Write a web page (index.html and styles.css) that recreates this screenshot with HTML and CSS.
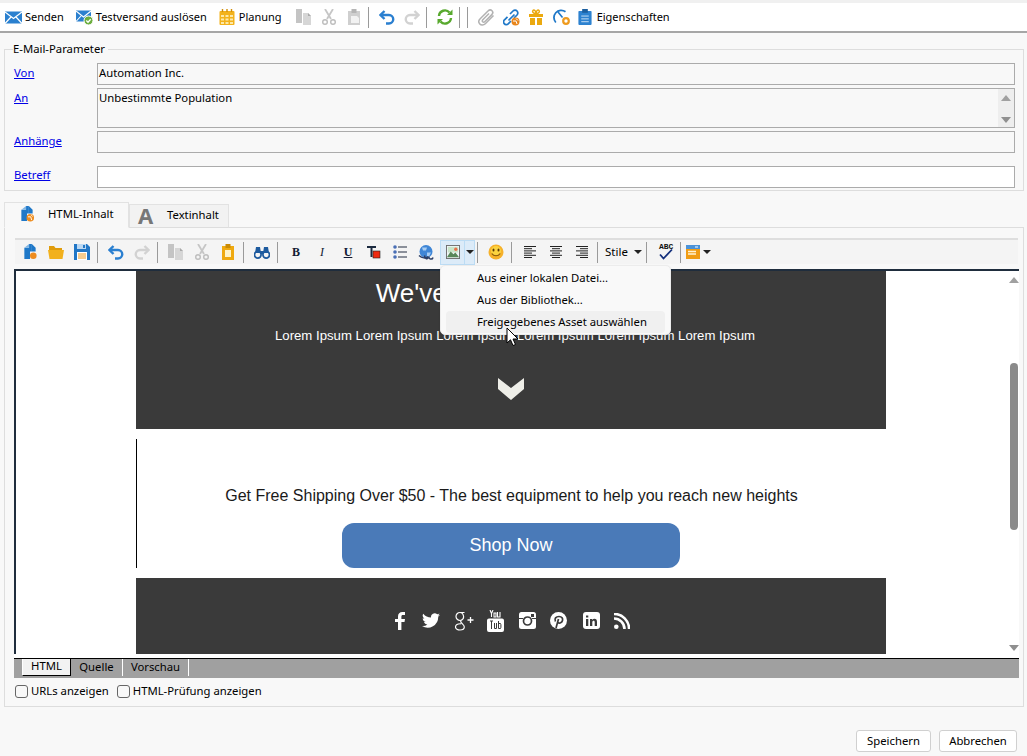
FILE: index.html
```html
<!DOCTYPE html>
<html lang="de">
<head>
<meta charset="utf-8">
<title>E-Mail-Parameter</title>
<link rel="stylesheet" href="styles.css">
</head>
<body>
<svg class="defs" width="0" height="0" aria-hidden="true">
  <symbol id="i-mail" viewBox="0 0 17 14"><rect x="0" y="1" width="17" height="12" fill="#2a80cf"/><path d="M0 1.5l8.5 6.5L17 1.5M0 13l6-6.5M17 13l-6-6.5" fill="none" stroke="#fff" stroke-width="1.2"/></symbol>
  <symbol id="i-test" viewBox="0 0 18 16"><rect x="0" y="1" width="15" height="11" fill="#2a80cf"/><path d="M0 1.5l7.5 6 7.5-6M0 12l5-5.500M15 12l-5-5.500" fill="none" stroke="#fff" stroke-width="1.100"/><circle cx="12.500" cy="11" r="4.500" fill="#6cae3e" stroke="#fff"/><path d="M10.300 11l1.700 1.700 2.700-3" fill="none" stroke="#fff" stroke-width="1.300"/></symbol>
  <symbol id="i-cal" viewBox="0 0 16 16"><rect x="0.500" y="2" width="15" height="14" rx="1" fill="#f3b21b"/><path d="M3.500 0v3M8 0v3M12.500 0v3" stroke="#d08e08" stroke-width="1.400"/><path d="M2 6h3v2H2zM6.500 6h3v2h-3zM11 6h3v2h-3zM2 9.500h3v2H2zM6.500 9.500h3v2h-3zM11 9.500h3v2h-3zM2 13h3v2H2zM6.500 13h3v2h-3zM11 13h3v2h-3z" fill="#fde9a8"/></symbol>
  <symbol id="i-copy" viewBox="0 0 16 16"><path d="M0 0h6v14H0z" fill="#c4c4c4"/><path d="M7 4h5l3 3v9H7z" fill="#d6d6d6"/><path d="M12 4v3h3" fill="#aaa"/></symbol>
  <symbol id="i-cut" viewBox="0 0 16 16"><path d="M4 0l6 10M12 0L6 10" stroke="#c6c6c6" stroke-width="1.800" fill="none"/><circle cx="4" cy="13" r="2.300" fill="none" stroke="#bdbdbd" stroke-width="1.400"/><circle cx="12" cy="13" r="2.300" fill="none" stroke="#bdbdbd" stroke-width="1.400"/></symbol>
  <symbol id="i-paste" viewBox="0 0 14 16"><path d="M1 2h12v14H1z" fill="#cfcfcf"/><path d="M4.500 0h5v4h-5z" fill="#b5b5b5"/><path d="M4 7h6l2 2v5H4z" fill="#f2f2f2"/></symbol>
  <symbol id="i-undo" viewBox="0 0 16 16"><path d="M5.500 2L1.500 6l4 4" fill="none" stroke="#2a7fd0" stroke-width="2.400"/><path d="M2 6h8a4 4 0 0 1 0 8.500H7" fill="none" stroke="#2a7fd0" stroke-width="2.400"/></symbol>
  <symbol id="i-redo" viewBox="0 0 16 16"><path d="M10.500 2l4 4-4 4" fill="none" stroke="#d2d2d2" stroke-width="2.400"/><path d="M14 6H6a4 4 0 0 0 0 8.500h3" fill="none" stroke="#d2d2d2" stroke-width="2.400"/></symbol>
  <symbol id="i-sync" viewBox="0 0 16 16"><path d="M2 7a6 6 0 0 1 10.500-3.500" fill="none" stroke="#58a92e" stroke-width="2.400"/><path d="M10 6h5.500V.5z" fill="#58a92e"/><path d="M14 9a6 6 0 0 1-10.500 3.500" fill="none" stroke="#58a92e" stroke-width="2.400"/><path d="M6 10H.5v5.500z" fill="#58a92e"/></symbol>
  <symbol id="i-clip" viewBox="0 0 17 17"><path d="M15.500 6.500L7.300 14.700c-1.700 1.700-4.300 1.700-5.500.3-1.300-1.400-1.200-3.700.4-5.300L10 2c1.300-1.300 3-1.300 4-.3s1 2.700-.2 3.900L6.700 12.700c-.6.600-1.500.6-2 .1s-.5-1.300.1-2L11 4.500" fill="none" stroke="#b2b2b2" stroke-width="1.500"/></symbol>
  <symbol id="i-link" viewBox="0 0 17 17"><path d="M7 5l3-3c1.200-1.200 3-1.200 4 0s1 2.800 0 4l-3 3M8 12l-2.800 2.800c-1.200 1.200-3 1-4-.2s-.8-2.600.3-3.800l3-3M5.500 11.500l6-6" fill="none" stroke="#1f78c8" stroke-width="1.700"/><circle cx="12.500" cy="12.500" r="4" fill="#e8861c"/><path d="M10 12h3l1 3M13 9.500l2 2" stroke="#fff" fill="none"/></symbol>
  <symbol id="i-gift" viewBox="0 0 16 16"><path d="M1 5h14v3H1zM2 9h5v7H2zM9 9h5v7H9z" fill="#eba90f"/><path d="M8 4.500C5 4.500 4 3 5 1.500s3 .5 3 3c0-2.500 2-4.500 3-3s0 3-3 3z" fill="none" stroke="#eba90f" stroke-width="1.500"/></symbol>
  <symbol id="i-gauge" viewBox="0 0 17 16"><path d="M2.800 13A7.300 7.300 0 0 1 12.500 2.200" fill="none" stroke="#1f78c8" stroke-width="1.800"/><path d="M5 2.500l4.500 5.500" stroke="#1f78c8" stroke-width="1.600"/><circle cx="13" cy="11.500" r="2.800" fill="none" stroke="#ee9a1e" stroke-width="2.200"/></symbol>
  <symbol id="i-props" viewBox="0 0 14 17"><rect y="2" width="14" height="15" rx="1" fill="#2d82d0"/><rect x="4" width="6" height="4" fill="#1c5f9f"/><path d="M3 7.500h8M3 10.500h8M3 13.500h8" stroke="#cfe3f6"/></symbol>
  <symbol id="i-new" viewBox="0 0 16 17"><path d="M2 4h5V0h3v8H2zM2 8h6v8H2z" fill="#1f78c8"/><path d="M10 0l4 4v4h-4z" fill="#1f78c8"/><path d="M7 0L2 4h5z" fill="#7db4e4"/><circle cx="11.500" cy="12.500" r="3.500" fill="#ee8c1e"/></symbol>
  <symbol id="i-html" viewBox="0 0 16 17"><path d="M2 4h5V0h3v8H2zM2 8h6v8H2z" fill="#1f78c8"/><path d="M10 0l4 4v4h-4z" fill="#1f78c8"/><path d="M7 0L2 4h5z" fill="#7db4e4"/><circle cx="11.500" cy="12.500" r="4" fill="#ee8c1e"/><path d="M9 11.500h3l1 3.500M12 9l2 2" stroke="#fff" fill="none"/></symbol>
  <symbol id="i-open" viewBox="0 0 16 14"><path d="M1 1h5l1.500 2H14v2H1z" fill="#e09c0c"/><path d="M0 5h16l-1.500 9h-13z" fill="#f2b11d"/></symbol>
  <symbol id="i-save" viewBox="0 0 16 16"><path d="M0 0h13l3 3v13H0z" fill="#2277c6"/><path d="M3 0h9v5H3z" fill="#bcd8f2"/><path d="M9 1h2v3H9z" fill="#2277c6"/><path d="M3 8h10v8H3z" fill="#fff"/><path d="M4 10h8M4 12h8M4 14h8" stroke="#ee9a1e"/></symbol>
  <symbol id="i-pasteo" viewBox="0 0 12 16"><path d="M0 2h12v14H0z" fill="#efa90f"/><path d="M3.500 0h5v4h-5z" fill="#c98a05"/><path d="M3 6h6v7H3z" fill="#fff3c8"/></symbol>
  <symbol id="i-find" viewBox="0 0 16 14"><circle cx="3.800" cy="9.800" r="3.300" fill="none" stroke="#1d5a9e" stroke-width="1.700"/><circle cx="12.200" cy="9.800" r="3.300" fill="none" stroke="#1d5a9e" stroke-width="1.700"/><path d="M2 2h4l1 6H1zM10 2h4l1 6H9zM6.500 6h3v3h-3z" fill="#1d5a9e"/></symbol>
  <symbol id="i-tcolor" viewBox="0 0 14 14"><path d="M0 1h9v2H5.500v9h-2V3H0z" fill="#1b2a3f"/><rect x="6" y="6" width="7" height="7" fill="#ee2b12" stroke="#222" stroke-width=".6"/></symbol>
  <symbol id="i-list" viewBox="0 0 14 14"><circle cx="2" cy="2" r="1.800" fill="#4a6fb5"/><circle cx="2" cy="7" r="1.800" fill="#4a6fb5"/><circle cx="2" cy="12" r="1.800" fill="#4a6fb5"/><path d="M5 2h9M5 7h9M5 12h9" stroke="#222c40" stroke-width="1.100"/></symbol>
  <symbol id="i-globe" viewBox="0 0 17 16"><circle cx="8" cy="7" r="6.500" fill="#3f86d6"/><path d="M4 3h5l-1 3H5zM9 8h4l-2 4H9z" fill="#a8cdf2"/><path d="M1 11c3 3 7 3 9 1M7 11a2 2 0 1 0 3.500 2M11 12a2 2 0 1 0 4 1" fill="none" stroke="#2c3f66" stroke-width="1.500"/></symbol>
  <symbol id="i-image" viewBox="0 0 15 15"><rect x=".5" y=".5" width="14" height="14" fill="#eef5f6" stroke="#6c6c6c"/><path d="M2 2h11v6H2z" fill="#c9e4c8"/><path d="M1 13l4-6 3 3 2-2 4 5z" fill="#58875a"/><circle cx="10.500" cy="4.500" r="1.800" fill="#e8704a"/></symbol>
  <symbol id="i-smile" viewBox="0 0 16 16"><circle cx="8" cy="8" r="7.500" fill="#f6b12a"/><circle cx="8" cy="7" r="5" fill="#fbd33f"/><ellipse cx="5.500" cy="6" rx="1" ry="1.600" fill="#5b3a08"/><ellipse cx="10.500" cy="6" rx="1" ry="1.600" fill="#5b3a08"/><path d="M3.800 9.500c2 3 6.400 3 8.400 0" fill="none" stroke="#8b5a0a" stroke-width="1.200"/></symbol>
  <symbol id="i-left" viewBox="0 0 12 12"><path d="M0 .5h12M0 2.700h8M0 4.900h12M0 7.100h8M0 9.300h12M0 11.500h8" stroke="#222"/></symbol>
  <symbol id="i-center" viewBox="0 0 12 12"><path d="M0 .5h12M2 2.700h8M0 4.900h12M2 7.100h8M0 9.300h12M2 11.500h8" stroke="#222"/></symbol>
  <symbol id="i-right" viewBox="0 0 12 12"><path d="M0 .5h12M4 2.700h8M0 4.900h12M4 7.100h8M0 9.300h12M4 11.500h8" stroke="#222"/></symbol>
  <symbol id="i-abc" viewBox="0 0 16 16"><path d="M3 10.500l3.500 4L15 5.500" fill="none" stroke="#14307c" stroke-width="1.800"/></symbol>
  <symbol id="i-form" viewBox="0 0 14 14"><path d="M0 0h14v4H0z" fill="#4b93d9"/><path d="M0 4h14v10H0z" fill="#f09c13"/><path d="M2 6.500h8M2 9h8" stroke="#fff3d5" stroke-width="1.300"/><path d="M9 2h3" stroke="#fff"/></symbol>
  <symbol id="i-f" viewBox="0 0 10 18"><path d="M3 18V10H0V7h3V4.500C3 1.500 4.800 0 7.300 0H10v3H8C6.700 3 6.400 3.600 6.400 4.700V7H10l-.5 3H6.400v8z" fill="#fff"/></symbol>
  <symbol id="i-tw" viewBox="0 0 18 15"><path d="M18 1.800c-.7.300-1.400.5-2.100.6.800-.5 1.300-1.200 1.600-2-.7.400-1.500.7-2.300.9A3.700 3.700 0 0 0 9 4.600 10.500 10.500 0 0 1 1.300.7a3.700 3.700 0 0 0 1.100 4.900c-.6 0-1.200-.2-1.700-.4 0 1.800 1.300 3.300 3 3.700-.5.100-1.100.2-1.700.1.500 1.500 1.800 2.500 3.400 2.500A7.400 7.400 0 0 1 0 13a10.500 10.500 0 0 0 16.200-9.300c.7-.5 1.300-1.200 1.800-1.900z" fill="#fff"/></symbol>
  <symbol id="i-gp" viewBox="0 0 19 20"><path d="M9.500 1.500H5C2.500 1.500 1 3.500 1 5.500S2.800 9.500 5 9.500 9 7.500 8.500 5 6 1.500 5 1.500M6 9.500c-1 1 0 2 1 3s2.300 1.700 2.300 3.500-2 3-4.300 3S.5 17.800.5 16s2-3.500 5.500-3.200" fill="none" stroke="#fff" stroke-width="1.200"/><path d="M15.500 6v6M12.500 9h6" stroke="#fff" stroke-width="1.300"/></symbol>
  <symbol id="i-yt" viewBox="0 0 17 22"><path d="M2 8.500h13a2 2 0 0 1 2 2v9.500a2 2 0 0 1-2 2H2a2 2 0 0 1-2-2v-9.500a2 2 0 0 1 2-2z" fill="#fff"/><path d="M3 11h3M4.500 11v8M7.500 13v5.500h2V13M11.500 11v7.500h2c.6 0 .6-5 0-5h-2" fill="none" stroke="#3a3a3a"/><path d="M3 0l1.500 3.500L6 0M4.500 3.500V7M7 3h2v4H7zM10.500 2v5h2.500V2" fill="none" stroke="#fff" stroke-width="1.100"/></symbol>
  <symbol id="i-ig" viewBox="0 0 17 17"><rect width="17" height="17" rx="2.500" fill="#fff"/><circle cx="8.500" cy="9" r="4" fill="none" stroke="#3a3a3a" stroke-width="1.700"/><path d="M0 6.500h4M13 6.500h4" stroke="#3a3a3a"/><rect x="12" y="2" width="3" height="3" fill="#3a3a3a"/></symbol>
  <symbol id="i-pin" viewBox="0 0 17 17"><circle cx="8.500" cy="8.500" r="8.500" fill="#fff"/><path d="M6 16l2.500-9M5.500 9.500c-1.500-3 .5-5 3.500-5s4 2 3.500 4-3 3.500-4.500 2" fill="none" stroke="#3a3a3a" stroke-width="1.700"/></symbol>
  <symbol id="i-in" viewBox="0 0 17 17"><rect width="17" height="17" rx="3" fill="#fff"/><path d="M3 7h2.300v7H3zM3 3.500h2.300v2H3zM7 7h2.200v1c.6-.8 1.400-1.200 2.300-1.200 1.700 0 2.500 1 2.500 3V14h-2.300v-3.800c0-1-.3-1.500-1.100-1.500s-1.300.6-1.300 1.600V14H7z" fill="#3a3a3a"/></symbol>
  <symbol id="i-rss" viewBox="0 0 16 16"><circle cx="2.300" cy="13.700" r="2.300" fill="#fff"/><path d="M0 5.500a10.500 10.500 0 0 1 10.500 10.500M0 .9a15.100 15.100 0 0 1 15.100 15.100" fill="none" stroke="#fff" stroke-width="2.600"/></symbol>
</svg>

<header class="topbar">
  <div class="item"><svg class="ic-17"><use href="#i-mail"/></svg><span>Senden</span></div>
  <div class="item item-test"><svg class="ic-18"><use href="#i-test"/></svg><span>Testversand auslösen</span></div>
  <div class="item item-plan"><svg class="ic-16"><use href="#i-cal"/></svg><span>Planung</span></div>
  <div class="tools tools-start">
    <span class="tb"><svg class="ic-16"><use href="#i-copy"/></svg></span>
    <span class="tb"><svg class="ic-16"><use href="#i-cut"/></svg></span>
    <span class="tb"><svg class="ic-16"><use href="#i-paste"/></svg></span>
    <i class="sep"></i>
    <span class="tb"><svg class="ic-16"><use href="#i-undo"/></svg></span>
    <span class="tb"><svg class="ic-16"><use href="#i-redo"/></svg></span>
    <i class="sep"></i>
    <span class="tb"><svg class="ic-16"><use href="#i-sync"/></svg></span>
    <i class="sep"></i>
    <i class="sep"></i>
    <span class="tb"><svg class="ic-17"><use href="#i-clip"/></svg></span>
    <span class="tb"><svg class="ic-17"><use href="#i-link"/></svg></span>
    <span class="tb"><svg class="ic-16"><use href="#i-gift"/></svg></span>
    <span class="tb"><svg class="ic-17"><use href="#i-gauge"/></svg></span>
    <div class="item item-props"><svg class="ic-16"><use href="#i-props"/></svg><span>Eigenschaften</span></div>
  </div>
</header>

<fieldset class="params">
  <legend>E-Mail-Parameter</legend>
  <div class="row"><a class="lnk" href="#">Von</a><div class="field">Automation Inc.</div></div>
  <div class="row"><a class="lnk" href="#">An</a><div class="field field-area">Unbestimmte Population<div class="mini-scroll"><b class="up"></b><b class="down"></b></div></div></div>
  <div class="row"><a class="lnk" href="#">Anhänge</a><div class="field"></div></div>
  <div class="row row-subject"><a class="lnk" href="#">Betreff</a><div class="field field-white"></div></div>
</fieldset>

<nav class="tabs">
  <div class="tab tab-on"><svg class="ic-16"><use href="#i-html"/></svg><span>HTML-Inhalt</span></div>
  <div class="tab"><span class="big-a">A</span><span>Textinhalt</span></div>
</nav>

<section class="panel">
  <div class="edbar">
    <span class="eb"><svg class="ic-16"><use href="#i-new"/></svg></span>
    <span class="eb"><svg class="ic-16"><use href="#i-open"/></svg></span>
    <span class="eb"><svg class="ic-16"><use href="#i-save"/></svg></span>
    <i class="esep"></i>
    <span class="eb"><svg class="ic-16"><use href="#i-undo"/></svg></span>
    <span class="eb"><svg class="ic-16"><use href="#i-redo"/></svg></span>
    <i class="esep"></i>
    <span class="eb"><svg class="ic-16"><use href="#i-copy"/></svg></span>
    <span class="eb"><svg class="ic-16"><use href="#i-cut"/></svg></span>
    <span class="eb"><svg class="ic-14"><use href="#i-pasteo"/></svg></span>
    <i class="esep"></i>
    <span class="eb"><svg class="ic-16"><use href="#i-find"/></svg></span>
    <i class="esep"></i>
    <span class="eb fmt fmt-b">B</span>
    <span class="eb fmt fmt-i">I</span>
    <span class="eb fmt fmt-u">U</span>
    <span class="eb"><svg class="ic-14"><use href="#i-tcolor"/></svg></span>
    <span class="eb"><svg class="ic-14"><use href="#i-list"/></svg></span>
    <span class="eb"><svg class="ic-17"><use href="#i-globe"/></svg></span>
    <div class="picker">
      <span class="pick-img"><svg class="ic-14"><use href="#i-image"/></svg></span>
      <span class="pick-arrow"><b class="caret"></b></span>
      <div class="menu">
        <div class="menu-item">Aus einer lokalen Datei...</div>
        <div class="menu-item">Aus der Bibliothek...</div>
        <div class="menu-item menu-hover">Freigegebenes Asset auswählen</div>
        <svg class="cursor" width="13" height="20" viewBox="0 0 13 20"><path d="M1 1v15l3.500-3.200L7 18.500l2.500-1L7 12h5z" fill="#fff" stroke="#000"/></svg>
      </div>
    </div>
    <i class="esep"></i>
    <span class="eb"><svg class="ic-16"><use href="#i-smile"/></svg></span>
    <i class="esep"></i>
    <span class="eb"><svg class="ic-12"><use href="#i-left"/></svg></span>
    <span class="eb"><svg class="ic-12"><use href="#i-center"/></svg></span>
    <span class="eb"><svg class="ic-12"><use href="#i-right"/></svg></span>
    <i class="esep"></i>
    <span class="styles-box">Stile<b class="caret"></b></span>
    <i class="esep"></i>
    <span class="eb abc"><span class="abc-t">ABC</span><svg class="ic-16"><use href="#i-abc"/></svg></span>
    <i class="esep"></i>
    <span class="form-box"><svg class="ic-14"><use href="#i-form"/></svg><b class="caret"></b></span>
  </div>

  <div class="frame">
    <div class="viewport">
      <div class="mail">
        <div class="hero">
          <h1 class="hero-title">We've got you covered!</h1>
          <p class="hero-text">Lorem Ipsum Lorem Ipsum Lorem Ipsum Lorem Ipsum Lorem Ipsum Lorem Ipsum</p>
          <svg class="chev" width="26" height="22" viewBox="0 0 26 22"><path d="M0 0l13 10L26 0v11L13 22 0 11z" fill="#eeeee8"/></svg>
        </div>
        <div class="promo">
          <p class="promo-text">Get Free Shipping Over $50 - The best equipment to help you reach new heights</p>
          <div class="shop">Shop Now</div>
        </div>
        <div class="social">
          <svg class="so so-f"><use href="#i-f"/></svg>
          <svg class="so so-tw"><use href="#i-tw"/></svg>
          <svg class="so so-gp"><use href="#i-gp"/></svg>
          <svg class="so so-yt"><use href="#i-yt"/></svg>
          <svg class="so so-ig"><use href="#i-ig"/></svg>
          <svg class="so so-pin"><use href="#i-pin"/></svg>
          <svg class="so so-in"><use href="#i-in"/></svg>
          <svg class="so so-rss"><use href="#i-rss"/></svg>
        </div>
      </div>
      <div class="vscroll"><b class="up"></b><span class="thumb"></span><b class="down"></b></div>
    </div>
    <div class="modes">
      <span class="mode mode-on">HTML</span>
      <span class="mode mode-q">Quelle</span>
      <span class="mode mode-v">Vorschau</span>
    </div>
  </div>

  <div class="checks">
    <label class="chk"><i class="box"></i>URLs anzeigen</label>
    <label class="chk"><i class="box"></i>HTML-Prüfung anzeigen</label>
  </div>
</section>

<footer class="actions">
  <span class="btn btn-save">Speichern</span>
  <span class="btn btn-cancel">Abbrechen</span>
</footer>
</body>
</html>
```

FILE: styles.css
```css
* { box-sizing: border-box; }
html, body { margin: 0; padding: 0; }
body {
  width: 1027px;
  height: 756px;
  overflow: hidden;
  background: #f8f8f8;
  color: #000;
  font: 11.3px/16px "Noto Sans", "Open Sans", sans-serif;
  border-top: 3px solid #f0f0f0;
}
svg { display: block; flex: none; }
.defs { position: absolute; }
.ic-12 { width: 12px; height: 12px; }
.ic-14 { width: 14px; height: 16px; }
.ic-16 { width: 16px; height: 16px; }
.ic-17 { width: 17px; height: 17px; }
.ic-18 { width: 18px; height: 17px; }

/* top toolbar */
.topbar {
  display: flex;
  align-items: center;
  height: 30px;
  padding-left: 5px;
  background: #fff;
  border-bottom: 2px solid #a6a6a6;
  font-size: 11px;
}
.item { display: flex; align-items: center; gap: 3px; white-space: nowrap; }
.item-test { margin-left: 12px; gap: 2px; }
.item-plan { margin-left: 12px; gap: 4px; }
.tools { display: flex; align-items: center; }
.tools-start { margin-left: 10px; }
.tb { width: 25px; display: flex; justify-content: center; }
.sep { display: block; width: 1px; height: 21px; background: #9a9a9a; margin: 0 6px 0 1px; }
.item-props { margin-left: 3px; gap: 4px; }

/* parameters */
.params {
  margin: 8px 3px 0 4px;
  padding: 6px 8px 2px 9px;
  border: 1px solid #ddd;
  min-width: 0;
}
.params legend { padding: 0 3px 0 0; margin-left: -1px; line-height: 16px; }
.row { display: grid; grid-template-columns: 83px 1fr; margin-bottom: 3px; }
.row-subject { margin: 13px 0 0; }
.row-subject .lnk { padding-top: 1px; }
.lnk { color: #0000e6; text-decoration: underline; padding-top: 2px; }
.field {
  position: relative;
  height: 22px;
  padding: 1px;
  border: 1px solid #ababab;
  background: #f8f8f8;
}
.field-area { height: 40px; }
.field-white { background: #fff; }
.mini-scroll {
  position: absolute;
  top: 0; right: 0; bottom: 0;
  width: 16px;
  padding: 6px 0 4px;
  background: #eeeeee;
  display: flex;
  flex-direction: column;
  justify-content: space-between;
  align-items: center;
}
.up { width: 0; height: 0; border: 5px solid transparent; border-top: 0; border-bottom: 6px solid #a0a0a0; }
.down { width: 0; height: 0; border: 5px solid transparent; border-bottom: 0; border-top: 6px solid #8f8f8f; }

/* tabs */
.tabs { display: flex; align-items: flex-end; margin: 11px 0 -1px 4px; height: 26px; position: relative; }
.tab {
  display: flex;
  align-items: center;
  height: 24px;
  width: 100px;
  padding: 0 0 2px 8px;
  gap: 13px;
  background: #f2f2f2;
  border: 1px solid #e2e2e2;
  border-bottom-color: #ddd;
}
.tab-on {
  width: 125px;
  height: 26px;
  padding-left: 14px;
  gap: 13px;
  background: #f8f8f8;
  border-bottom-color: #f8f8f8;
  position: relative;
  z-index: 1;
}
.big-a { font: bold 22px/24px "Noto Sans", sans-serif; color: #777; width: 16px; margin-top: -1px; }

/* panel */
.panel {
  margin: 0 3px 0 4px;
  height: 480px;
  padding: 10px 4px 0 9px;
  border: 1px solid #ddd;
}
.edbar {
  display: flex;
  align-items: center;
  height: 26px;
  margin: 0 1px;
  padding-left: 2px;
  background: #f4f4f4;
  border-top: 2px solid #dedede;
}
.eb { width: 26px; height: 24px; display: flex; align-items: center; justify-content: center; flex: none; }
.esep { display: block; flex: none; width: 1px; height: 21px; background: #9a9a9a; margin: 0 5px 0 2px; }
.fmt { font-family: "Liberation Serif", serif; font-size: 12px; color: #111a33; }
.fmt-b { font-weight: bold; }
.fmt-i { font-style: italic; }
.fmt-u { font-weight: bold; text-decoration: underline; }
.picker { position: relative; display: flex; height: 25px; margin-left: 1px; }
.pick-img {
  width: 25px;
  display: flex;
  align-items: center;
  justify-content: center;
  background: #dcebf8;
  border: 1px solid #bcdcf4;
}
.pick-arrow {
  width: 10px;
  display: flex;
  align-items: center;
  justify-content: center;
  background: #dcebf8;
  border: 1px solid #bcdcf4;
  border-left: 0;
}
.caret { display: block; width: 0; height: 0; border: 4px solid transparent; border-bottom: 0; border-top: 4px solid #222; }
.styles-box { width: 41px; display: flex; align-items: center; justify-content: space-between; padding-left: 2px; padding-right: 2px; font-size: 11.5px; }
.abc { position: relative; }
.abc-t { position: absolute; top: 2px; left: 7px; font: bold 8px/9px "Liberation Mono", monospace; color: #111; }
.form-box { display: flex; align-items: center; gap: 3px; }

/* insert menu */
.menu {
  position: absolute;
  z-index: 5;
  left: 0;
  top: 25px;
  width: 231px;
  height: 70px;
  padding: 1px 5px 0;
  background: #f9f9f9;
  border: 1px solid #ececec;
  border-radius: 5px;
  box-shadow: 0 1px 2px rgba(0,0,0,.12);
}
.menu-item { height: 22px; line-height: 22px; padding-left: 31px; border-radius: 4px; white-space: nowrap; }
.menu-hover { background: #f0f0f0; }
.cursor { position: absolute; left: 65px; top: 61px; }

/* editor frame */
.frame { margin-top: 5px; background: #fff; }
.viewport {
  display: flex;
  height: 385px;
  background: #fff;
  border-top: 2px solid #1f2d3d;
  border-left: 2px solid #1f2d3d;
  overflow: hidden;
}
.mail { flex: 1; padding-left: 120px; padding-right: 123px; font-family: "Liberation Sans", Arial, sans-serif; }
.hero {
  height: 158px;
  padding-top: 7px;
  background: #3a3a3a;
  color: #fff;
  text-align: center;
}
.hero-title { margin: 0; font-size: 26px; line-height: 30px; font-weight: normal; }
.hero-text { margin: 20px 0 0; padding-left: 8px; font-size: 13.2px; line-height: 16px; }
.chev { margin: 34px auto 0; }
.promo {
  height: 129px;
  margin-top: 10px;
  padding-top: 47px;
  border-left: 1px solid #000;
  text-align: center;
}
.promo-text { margin: 0; font-size: 16px; line-height: 19px; color: #1a1a1a; }
.shop {
  width: 338px;
  height: 45px;
  margin: 18px auto 0 205px;
  border-radius: 12px;
  background: #4a7ab8;
  color: #fff;
  font-size: 18px;
  line-height: 45px;
}
.social {
  display: flex;
  align-items: center;
  height: 76px;
  margin-top: 10px;
  padding: 9px 0 0 259px;
  background: #3a3a3a;
}
.so-f { width: 10px; height: 18px; }
.so-tw { width: 18px; height: 15px; margin-left: 17px; }
.so-gp { width: 19px; height: 20px; margin-left: 15px; }
.so-yt { width: 17px; height: 22px; margin-left: 13px; }
.so-ig { width: 17px; height: 17px; margin-left: 15px; }
.so-pin { width: 17px; height: 17px; margin-left: 14px; }
.so-in { width: 17px; height: 17px; margin-left: 16px; }
.so-rss { width: 16px; height: 16px; margin-left: 14px; }
.vscroll {
  flex: none;
  width: 10px;
  display: flex;
  flex-direction: column;
  align-items: center;
  padding-top: 6px;
}
.thumb { width: 8px; height: 167px; margin-top: 80px; background: #8a8a8a; border-radius: 4px; }
.vscroll .down { margin-top: 115px; }
.modes {
  display: flex;
  height: 24px;
  padding-left: 8px;
  border-top: 4px solid #fff;
  background: #a0a0a0;
  box-shadow: inset 0 1px 0 #000;
}
.mode { height: 17px; line-height: 13px; text-align: center; margin-top: 1px; border-right: 1px solid #fff; }
.mode-q, .mode-v { line-height: 15px; }
.mode-on { width: 49px; background: #f2f2f2; border-left: 1px solid #fff; border-right: 1px solid #000; border-bottom: 1px solid #000; }
.mode-q { width: 52px; }
.mode-v { width: 66px; }
.checks { display: flex; margin-top: 5px; padding-left: 1px; gap: 8px; }
.chk { display: flex; align-items: center; gap: 3px; height: 16px; }
.box { display: block; width: 13px; height: 13px; border: 1px solid #666; border-radius: 3px; background: #f8f8f8; }

/* buttons */
.actions { display: flex; justify-content: flex-end; gap: 8px; margin-top: 23px; padding-right: 10px; }
.btn {
  height: 22px;
  line-height: 20px;
  text-align: center;
  background: #fff;
  border: 1px solid #d0d0d0;
  border-radius: 3px;
}
.btn-save { width: 75px; }
.btn-cancel { width: 78px; }
```
